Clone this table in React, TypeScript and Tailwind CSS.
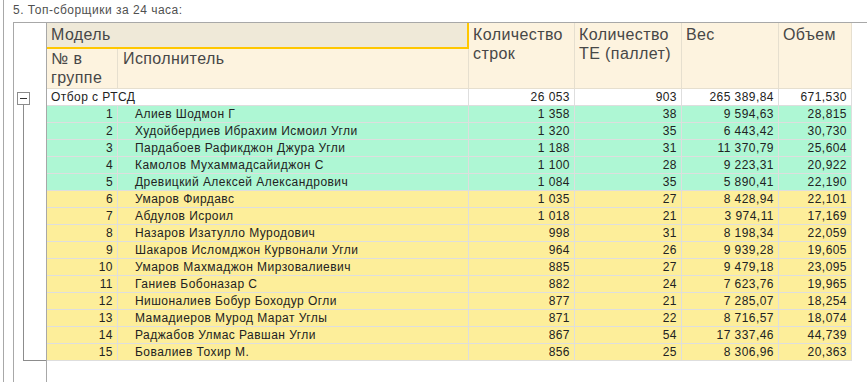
import React from "react";

type Row = [string, string, string, string, string, string];

const top: Row[] = [
  ["1", "Алиев Шодмон Г", "1 358", "38", "9 594,63", "28,815"],
  ["2", "Худойбердиев Ибрахим Исмоил Угли", "1 320", "35", "6 443,42", "30,730"],
  ["3", "Пардабоев Рафикджон Джура Угли", "1 188", "31", "11 370,79", "25,604"],
  ["4", "Камолов Мухаммадсайиджон С", "1 100", "28", "9 223,31", "20,922"],
  ["5", "Древицкий Алексей Александрович", "1 084", "35", "5 890,41", "22,190"],
  ["6", "Умаров Фирдавс", "1 035", "27", "8 428,94", "22,101"],
  ["7", "Абдулов Исроил", "1 018", "21", "3 974,11", "17,169"],
  ["8", "Назаров Изатулло Муродович", "998", "31", "8 198,34", "22,059"],
  ["9", "Шакаров Исломджон Курвонали Угли", "964", "26", "9 939,28", "19,605"],
  ["10", "Умаров Махмаджон Мирзовалиевич", "885", "27", "9 479,18", "23,095"],
  ["11", "Ганиев Бобоназар С", "882", "24", "7 623,76", "19,965"],
  ["12", "Нишоналиев Бобур Боходур Огли", "877", "21", "7 285,07", "18,254"],
  ["13", "Мамадиеров Мурод Марат Углы", "871", "22", "8 716,57", "18,074"],
  ["14", "Раджабов Улмас Равшан Угли", "867", "54", "17 337,46", "44,739"],
  ["15", "Бовалиев Тохир М.", "856", "25", "8 306,96", "20,363"],
];

const cols = "grid grid-cols-[71px_351px_106px_107px_97px_73px]";
const cell = "h-[17px] border-r border-b border-[#dedede] leading-[16px] px-[4px] whitespace-nowrap overflow-hidden";
const head = "border-r border-b border-[#e6dfcf] bg-[#fdf3df] pl-[4px]";

export default function App() {
  return (
    <div className="h-[382px] w-[867px] overflow-hidden bg-white font-['Liberation_Sans',Arial,sans-serif]">
      <div className="ml-[3px] h-full border-l border-[#a8a8a8] pl-[9px]">
        {/* title */}
        <div className="h-[22px] pt-[3px] text-[12px] leading-[15px] tracking-[0.5px] text-[#505050]">
          5. Топ-сборщики за 24 часа:
        </div>

        {/* table box */}
        <div className="flex h-[400px] border-t border-l border-[#a8a8a8]">
          {/* tree column */}
          <div className="w-[33px] shrink-0 border-r border-[#a8a8a8]">
            <div className="h-[66px]" />
            <div className="pt-[3px] pl-[3px]">
              <div className="flex h-[13px] w-[13px] items-center justify-center border border-[#8c8c8c] bg-white">
                <div className="h-px w-[7px] bg-[#333]" />
              </div>
            </div>
            <div className="ml-[9px] h-[256px] border-b border-l border-[#8c8c8c]" />
          </div>

          {/* grid */}
          <div>
            {/* header */}
            <div className={`${cols} grid-rows-[26px_40px] text-[16px] leading-[19px] tracking-[0.4px] text-[#474747]`}>
              <div className="col-span-2 border-r-2 border-b-2 border-[#ffc700] bg-[#efe9d8] pl-[4px] pt-[2px]">
                Модель
              </div>
              <div className={`${head} row-span-2 pt-[2px]`}>
                Количество
                <br />
                строк
              </div>
              <div className={`${head} row-span-2 pt-[2px]`}>
                Количество
                <br />
                ТЕ (паллет)
              </div>
              <div className={`${head} row-span-2 pt-[2px]`}>Вес</div>
              <div className={`${head} row-span-2 pt-[2px]`}>Объем</div>
              <div className={head}>
                № в
                <br />
                группе
              </div>
              <div className={`${head} pl-[5px]`}>Исполнитель</div>
            </div>

            {/* group row */}
            <div className={`${cols} text-[12px] tracking-[0.45px] text-[#222]`}>
              <div className={`${cell} col-span-2`}>Отбор с РТСД</div>
              <div className={`${cell} text-right`}>26 053</div>
              <div className={`${cell} text-right`}>903</div>
              <div className={`${cell} text-right`}>265 389,84</div>
              <div className={`${cell} text-right`}>671,530</div>
            </div>

            {top.map((r, i) => {
              const bg = i < 5 ? "bg-[#aef7d4]" : "bg-[#fdee9a]";
              return (
                <div key={r[0]} className={`${cols} text-[12px] tracking-[0.45px] text-[#222]`}>
                  <div className={`${cell} ${bg} text-right`}>{r[0]}</div>
                  <div className={`${cell} ${bg} pl-[17px]`}>{r[1]}</div>
                  <div className={`${cell} ${bg} text-right`}>{r[2]}</div>
                  <div className={`${cell} ${bg} text-right`}>{r[3]}</div>
                  <div className={`${cell} ${bg} text-right`}>{r[4]}</div>
                  <div className={`${cell} ${bg} text-right`}>{r[5]}</div>
                </div>
              );
            })}
          </div>
        </div>
      </div>
    </div>
  );
}
